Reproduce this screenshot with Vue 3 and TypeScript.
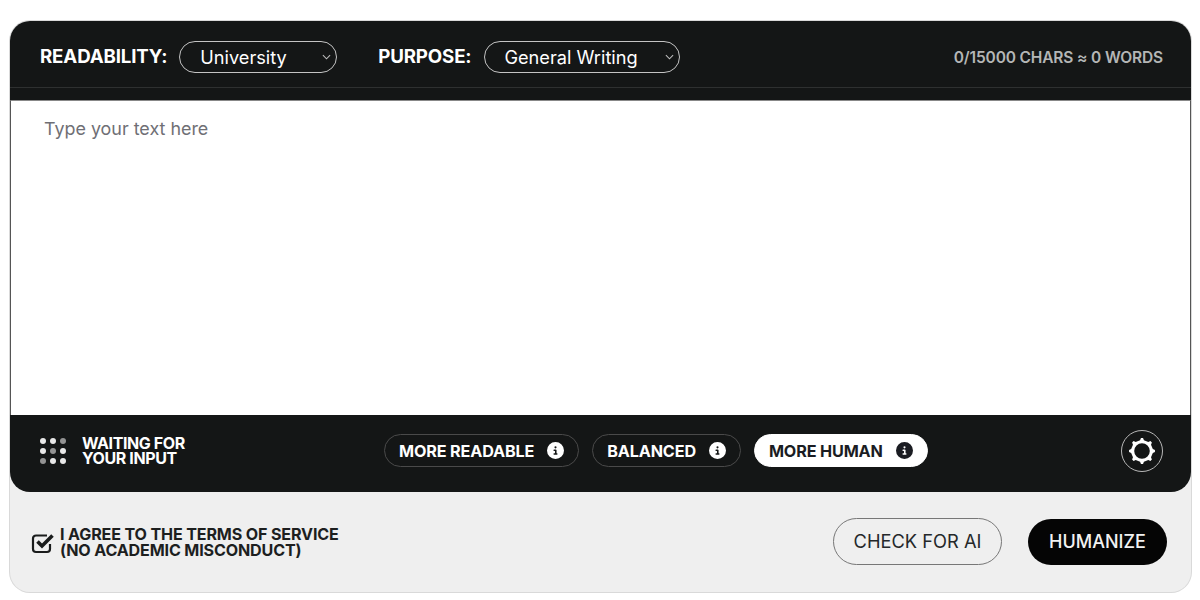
<script setup lang="ts">
interface Mode { label: string; active: boolean }
const modes: Mode[] = [
  { label: 'MORE READABLE', active: false },
  { label: 'BALANCED', active: false },
  { label: 'MORE HUMAN', active: true },
]
const dotOpacity: number[] = [1, 1, 0.6, 1, 0.6, 1, 0.6, 1, 1]
const gearPath = (() => {
  const pts: string[] = []
  const teeth = 8
  for (let i = 0; i < teeth; i++) {
    const a = (i / teeth) * Math.PI * 2
    const w = Math.PI / teeth
    const p = (r: number, t: number) => `${(14 + r * Math.sin(t)).toFixed(2)} ${(14 - r * Math.cos(t)).toFixed(2)}`
    pts.push(p(11, a - w * 0.45), p(13, a - w * 0.2), p(13, a + w * 0.2), p(11, a + w * 0.45))
  }
  return 'M' + pts.join('L') + 'Z M14 6.200a7.800 7.800 0 1 0 0 15.600a7.800 7.800 0 1 0 0-15.600Z'
})()
</script>

<template>
  <div class="page">
    <section class="card">
      <header class="top">
        <div class="top-row">
          <div class="selectors">
            <span class="sel-label">READABILITY:</span>
            <div class="select sel-uni">
              <span>University</span>
              <svg class="chev" viewBox="0 0 10 6" width="9" height="6"><path d="M1 1l4 4 4-4" fill="none" stroke="currentColor" stroke-width="1.2" /></svg>
            </div>
            <span class="sel-label second">PURPOSE:</span>
            <div class="select sel-purpose">
              <span>General Writing</span>
              <svg class="chev" viewBox="0 0 10 6" width="9" height="6"><path d="M1 1l4 4 4-4" fill="none" stroke="currentColor" stroke-width="1.2" /></svg>
            </div>
          </div>
          <div class="counter">0/15000 CHARS ≈ 0 WORDS</div>
        </div>
      </header>

      <div class="editor">Type your text here</div>

      <div class="bottom">
        <div class="status">
          <div class="dots">
            <i v-for="(o, i) in dotOpacity" :key="i" :style="{ opacity: o }"></i>
          </div>
          <div class="status-text">WAITING FOR<br />YOUR INPUT</div>
        </div>
        <div class="modes">
          <div v-for="m in modes" :key="m.label" class="mode" :class="{ active: m.active }">
            <span>{{ m.label }}</span>
            <svg viewBox="0 0 512 512" width="17" height="17"><path fill="currentColor" d="M256 512A256 256 0 1 0 256 0a256 256 0 1 0 0 512zM216 336h24V272H216c-13.300 0-24-10.700-24-24s10.700-24 24-24h48c13.300 0 24 10.700 24 24v88h8c13.300 0 24 10.700 24 24s-10.700 24-24 24H216c-13.300 0-24-10.700-24-24s10.700-24 24-24zm40-208a32 32 0 1 1 0 64 32 32 0 1 1 0-64z" /></svg>
          </div>
        </div>
        <div class="gear">
          <svg viewBox="0 0 28 28" width="28" height="28"><path fill="#fff" fill-rule="evenodd" :d="gearPath" /></svg>
        </div>
      </div>

      <footer class="foot">
        <div class="agree">
          <svg class="check" viewBox="0 0 24 22" width="24" height="22">
            <path d="M19 12v5a3 3 0 0 1-3 3H5a3 3 0 0 1-3-3V6.500a3 3 0 0 1 3-3h11" fill="none" stroke="#1a1c1c" stroke-width="2.200" />
            <path d="M6.500 9.500l4.500 4.500 10.500-10.500" fill="none" stroke="#1a1c1c" stroke-width="3.600" />
          </svg>
          <div class="agree-text">I AGREE TO THE TERMS OF SERVICE<br />(NO ACADEMIC MISCONDUCT)</div>
        </div>
        <div class="actions">
          <button class="btn ghost">CHECK FOR AI</button>
          <button class="btn solid">HUMANIZE</button>
        </div>
      </footer>
    </section>
  </div>
</template>

<style scoped>
.page {
  box-sizing: border-box;
  width: 1200px;
  height: 600px;
  padding: 21px 9px 8px 10px;
  background: #fff;
  font-family: Inter, "Liberation Sans", sans-serif;
}
.card {
  height: 571px;
  display: flex;
  flex-direction: column;
  border-radius: 20px;
  background: #efefef;
  box-shadow: 0 0 0 1px #d9d9d9;
  overflow: hidden;
}
.top {
  height: 79px;
  background: #141616;
  flex: none;
}
.top-row {
  border-bottom: 1px solid #2e3030;
  display: flex;
  align-items: center;
  justify-content: space-between;
  padding: 5px 28px 0 30px;
  box-sizing: border-box;
  height: 67px;
}
.selectors { display: flex; align-items: center; }
.sel-label {
  color: #fff;
  font-size: 18.700px;
  font-weight: 700;
  letter-spacing: -0.15px;
  white-space: nowrap;
}
.sel-label.second { margin-left: 41px; }
.select {
  box-sizing: border-box;
  height: 32px;
  margin-left: 12px;
  border: 1px solid #c4c4c4;
  border-radius: 16px;
  color: #fff;
  font-size: 18.200px;
  display: flex;
  align-items: center;
  justify-content: space-between;
  padding: 0 5px 0 20px;
}
.sel-uni { width: 158px; }
.sel-purpose { width: 196px; margin-left: 13px; padding-left: 19px; }
.chev { color: #bdbdbd; margin-top: 1px; }
.counter {
  color: #b4b6b6;
  font-size: 15.500px;
  font-weight: 600;
  letter-spacing: -0.15px;
  margin-top: 1px;
}
.editor {
  height: 315px;
  flex: none;
  box-sizing: border-box;
  background: #fff;
  border-left: 1px solid #555;
  border-right: 1px solid #555;
  border-top: 1px solid #888;
  padding: 17px 33px;
  color: #6f6f75;
  font-size: 17.900px;
  line-height: 22px;
}
.bottom {
  height: 77px;
  flex: none;
  background: #141616;
  border-radius: 0 0 20px 20px;
  display: flex;
  align-items: center;
  padding: 0 28px 6px 30px;
  box-sizing: border-box;
}
.status { display: flex; align-items: center; width: 344px; }
.dots {
  display: grid;
  grid-template-columns: repeat(3, 6px);
  grid-auto-rows: 6px;
  gap: 4px;
  margin-right: 16px;
}
.dots i { background: #e8e8e8; border-radius: 50%; }
.status-text {
  color: #fff;
  font-size: 16px;
  font-weight: 700;
  line-height: 15px;
  letter-spacing: -0.4px;
}
.modes { display: flex; gap: 13px; }
.mode {
  box-sizing: border-box;
  height: 33px;
  display: flex;
  align-items: center;
  gap: 13px;
  padding: 0 14px;
  border: 1px solid #4a4a4a;
  border-radius: 17px;
  color: #fff;
  font-size: 16.200px;
  font-weight: 700;
  letter-spacing: -0.15px;
}
.mode.active { background: #fff; border-color: #fff; color: #1a1c22; }
.gear {
  margin-left: auto;
  width: 42px;
  height: 42px;
  box-sizing: border-box;
  border: 1.500px solid #b8b8b8;
  border-radius: 50%;
  display: flex;
  align-items: center;
  justify-content: center;
}
.foot {
  flex: 1;
  display: flex;
  align-items: center;
  justify-content: space-between;
  padding: 0 24px 2px 21px;
}
.agree { display: flex; align-items: center; gap: 5px; margin-top: 2px; }
.check { flex: none; margin-top: 2px; }
.agree-text {
  color: #1d1f1f;
  font-size: 16.100px;
  font-weight: 700;
  line-height: 16px;
  letter-spacing: -0.15px;
}
.actions { display: flex; gap: 26px; }
.btn {
  font-family: inherit;
  box-sizing: border-box;
  height: 47px;
  border-radius: 24px;
  font-size: 18.300px;
  font-weight: 400;
  padding: 0;
  margin: 0;
}
.ghost {
  width: 169px;
  background: transparent;
  border: 1px solid #777;
  color: #25282a;
}
.solid {
  width: 139px;
  height: 46px;
  margin-top: 1px;
  background: #050505;
  border: none;
  color: #f2f2f2;
  font-size: 18px;
  font-weight: 500;
}
</style>
